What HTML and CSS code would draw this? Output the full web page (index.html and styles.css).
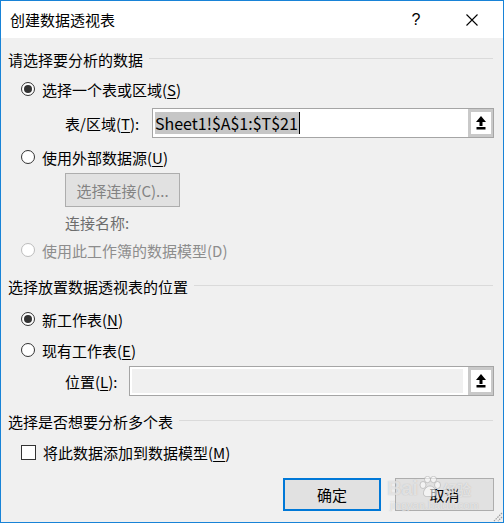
FILE: index.html
```html
<!DOCTYPE html>
<html>
<head>
  <title>创建数据透视表</title>
  <link rel="stylesheet" href="styles.css">
</head>
<body>

<div class="dialog">
  <!-- Title bar -->
  <div class="titlebar">
    <span class="title">创建数据透视表</span>
    <span class="help">?</span>
    <span class="close">
      <svg width="12" height="12" viewBox="0 0 12 12"><path d="M0.5 0.5L11.5 11.5M11.5 0.5L0.5 11.5" stroke="#000" stroke-width="1.1" fill="none"/></svg>
    </span>
  </div>

  <div class="content">
    <!-- Source -->
    <div class="group-head">请选择要分析的数据</div>
    <div class="option opt-first"><span class="radio checked"></span>选择一个表或区域(<u>S</u>)</div>
    <div class="field field-range">
      <span class="field-label">表/区域(<u>T</u>):</span>
      <div class="input">
        <div class="input-text"><span class="sel">Sheet1!$A$1:$T$21</span><span class="caret"></span></div>
        <span class="pick"><svg width="10" height="14" viewBox="0 0 10 14"><path d="M5 0L10 6H6.5V10H3.5V6H0Z" fill="#000"/><rect x="0.5" y="11" width="9" height="2.5" fill="#000"/></svg></span>
      </div>
    </div>
    <div class="option opt-ext"><span class="radio"></span>使用外部数据源(<u>U</u>)</div>
    <button class="btn-conn" disabled>选择连接(C)...</button>
    <div class="conn-name">连接名称:</div>
    <div class="option opt-model disabled"><span class="radio"></span>使用此工作簿的数据模型(D)</div>

    <!-- Destination -->
    <div class="group-head head-place">选择放置数据透视表的位置</div>
    <div class="option opt-new"><span class="radio checked"></span>新工作表(<u>N</u>)</div>
    <div class="option opt-exist"><span class="radio"></span>现有工作表(<u>E</u>)</div>
    <div class="field field-place">
      <span class="field-label">位置(<u>L</u>):</span>
      <div class="input disabled">
        <div class="input-text"></div>
        <span class="pick"><svg width="10" height="14" viewBox="0 0 10 14"><path d="M5 0L10 6H6.5V10H3.5V6H0Z" fill="#000"/><rect x="0.5" y="11" width="9" height="2.5" fill="#000"/></svg></span>
      </div>
    </div>

    <!-- Multiple tables -->
    <div class="group-head head-multi">选择是否想要分析多个表</div>
    <div class="option opt-check"><span class="checkbox"></span>将此数据添加到数据模型(<u>M</u>)</div>

    <div class="actions">
      <button class="btn btn-ok">确定</button>
      <button class="btn">取消</button>
    </div>
  </div>

  <!-- watermark of the screenshot source -->
  <div class="watermark">
    <div class="wm-big">
      <span>Bai</span>
      <svg class="wm-paw" width="24" height="22" viewBox="0 0 24 22">
        <g fill="rgba(255,255,255,0.6)" stroke="rgba(150,150,150,0.45)" stroke-width="1">
          <ellipse cx="5" cy="9" rx="3" ry="3.5"/>
          <ellipse cx="9.5" cy="3.5" rx="3" ry="3.2"/>
          <ellipse cx="15.5" cy="3.5" rx="3" ry="3.2"/>
          <ellipse cx="19.5" cy="9" rx="3" ry="3.5"/>
          <path d="M12 10C8 10 5 15 5.5 18C6 21 9 20.5 12 20.5C15 20.5 18 21 18.5 18C19 15 16 10 12 10Z"/>
        </g>
      </svg>
      <span class="wm-cn">经验</span>
    </div>
    <div class="wm-small">jingyan.baidu.com</div>
  </div>

  <svg class="grip" width="12" height="12" viewBox="0 0 12 12">
    <path d="M11 3L3 11M11 7L7 11" stroke="#9a9a9a" stroke-width="1.2" stroke-dasharray="1.5 1" fill="none"/>
  </svg>
</div>

</body>
</html>
```

FILE: styles.css
```css
html, body {
  margin: 0;
  padding: 0;
  background: #f0f0f0;
}
body {
  font-family: "Noto Sans CJK SC", "Noto Sans", sans-serif;
  font-size: 15px;
  color: #000;
}
u {
  text-underline-offset: 2px;
}

/* Window */
.dialog {
  position: relative;
  width: 504px;
  height: 523px;
  box-sizing: border-box;
  border: 1px solid #1883d7;
  background: #f0f0f0;
  overflow: hidden;
}
.titlebar {
  display: flex;
  align-items: center;
  height: 37px;
  background: #fff;
  padding-left: 9px;
}
.title {
  flex: 1;
  line-height: 20px;
}
.help {
  width: 14px;
  text-align: center;
  font-family: "Liberation Sans", sans-serif;
  font-size: 16px;
  margin-right: 43px;
}
.close {
  display: flex;
  margin-right: 25px;
}

.content {
  padding: 10px 9px 0 7px;
}

/* Group headings with rule */
.group-head {
  display: flex;
  align-items: center;
  height: 24px;
  line-height: 24px;
  white-space: nowrap;
}
.group-head::after {
  content: "";
  flex: 1;
  height: 1px;
  background: #dadada;
  margin: -3px 1px 0 6px;
}
.head-place { margin-top: 13px; }
.head-multi { margin-top: 14px; }

/* Radio / checkbox rows */
.option {
  display: flex;
  align-items: center;
  height: 24px;
  padding-left: 13px;
  white-space: nowrap;
}
.opt-first { margin-top: 5px; }
.opt-ext { margin-top: 7px; }
.opt-model { margin-top: 3px; }
.opt-new { margin-top: 8px; }
.opt-exist { margin-top: 7px; }
.opt-check { margin-top: 6px; }
.option.disabled { color: #8d8d8d; }

.radio {
  position: relative;
  width: 14px;
  height: 14px;
  box-sizing: border-box;
  border: 1px solid #333;
  border-radius: 50%;
  background: #fff;
  margin-right: 7px;
  flex: none;
}
.radio.checked::after {
  content: "";
  position: absolute;
  left: 2px;
  top: 2px;
  width: 8px;
  height: 8px;
  border-radius: 50%;
  background: #333;
}
.option.disabled .radio { border-color: #bcbcbc; }

.checkbox {
  width: 15px;
  height: 15px;
  box-sizing: border-box;
  border: 1px solid #333;
  background: #fff;
  margin-right: 7px;
  flex: none;
}

/* Label + reference inputs */
.field {
  display: flex;
  align-items: center;
  padding-left: 57px;
}
.field-range { margin-top: 7px; }
.field-place { margin-top: 4px; }
.field-range .field-label { width: 87px; }
.field-place .field-label { width: 64px; }

.input {
  flex: 1;
  display: flex;
  height: 30px;
  box-sizing: border-box;
  border: 1px solid #a5a5a5;
  background: #fff;
}
.input-text {
  flex: 1;
  display: flex;
  align-items: center;
  padding-left: 2px;
}
.sel {
  background: #c6c6c6;
  font-size: 16px;
  line-height: 22px;
  padding-right: 1px;
}
.caret {
  width: 1px;
  height: 22px;
  background: #000;
}
.input.disabled .input-text {
  background: #f0f0f0;
  border: 2px solid #fff;
  border-right-width: 5px;
}
.pick {
  width: 25px;
  box-sizing: border-box;
  border: 3px solid #c9c9c9;
  border-right-width: 2px;
  background: #fff;
  display: flex;
  align-items: center;
  justify-content: center;
}

.btn-conn {
  display: block;
  margin: 4px 0 0 57px;
  width: 115px;
  height: 34px;
  border: 1px solid #adadad;
  background: #e1e1e1;
  color: #838383;
  font-family: inherit;
  font-size: 15px;
  padding: 0;
}
.conn-name {
  margin: 4px 0 0 57px;
  height: 24px;
  line-height: 24px;
  color: #6d6d6d;
}

/* Dialog buttons */
.actions {
  display: flex;
  justify-content: flex-end;
  gap: 14px;
  margin-top: 14px;
}
.btn {
  width: 99px;
  height: 33px;
  box-sizing: border-box;
  border: 1px solid #adadad;
  background: #e1e1e1;
  font-family: inherit;
  font-size: 15px;
  color: #000;
  padding: 0;
}
.btn-ok {
  width: 98px;
  border: 2px solid #0078d7;
}

/* Overlays */
.watermark {
  position: absolute;
  left: 386px;
  top: 473px;
  color: rgba(255, 255, 255, 0.6);
  text-shadow: 0 0 1px rgba(130, 130, 130, 0.5);
  pointer-events: none;
}
.wm-big {
  display: flex;
  align-items: flex-end;
  height: 24px;
  font-family: "Liberation Sans", "Noto Sans CJK SC", sans-serif;
  font-size: 20px;
  font-weight: bold;
  line-height: 20px;
}
.wm-paw {
  margin: 0 1px 0 0;
}
.wm-cn {
  font-size: 14px;
  line-height: 16px;
}
.wm-small {
  font-family: "Liberation Sans", sans-serif;
  font-size: 11px;
  line-height: 12px;
  padding: 1px 0 0 3px;
}
.grip {
  position: absolute;
  right: 0;
  bottom: 0;
}
```
